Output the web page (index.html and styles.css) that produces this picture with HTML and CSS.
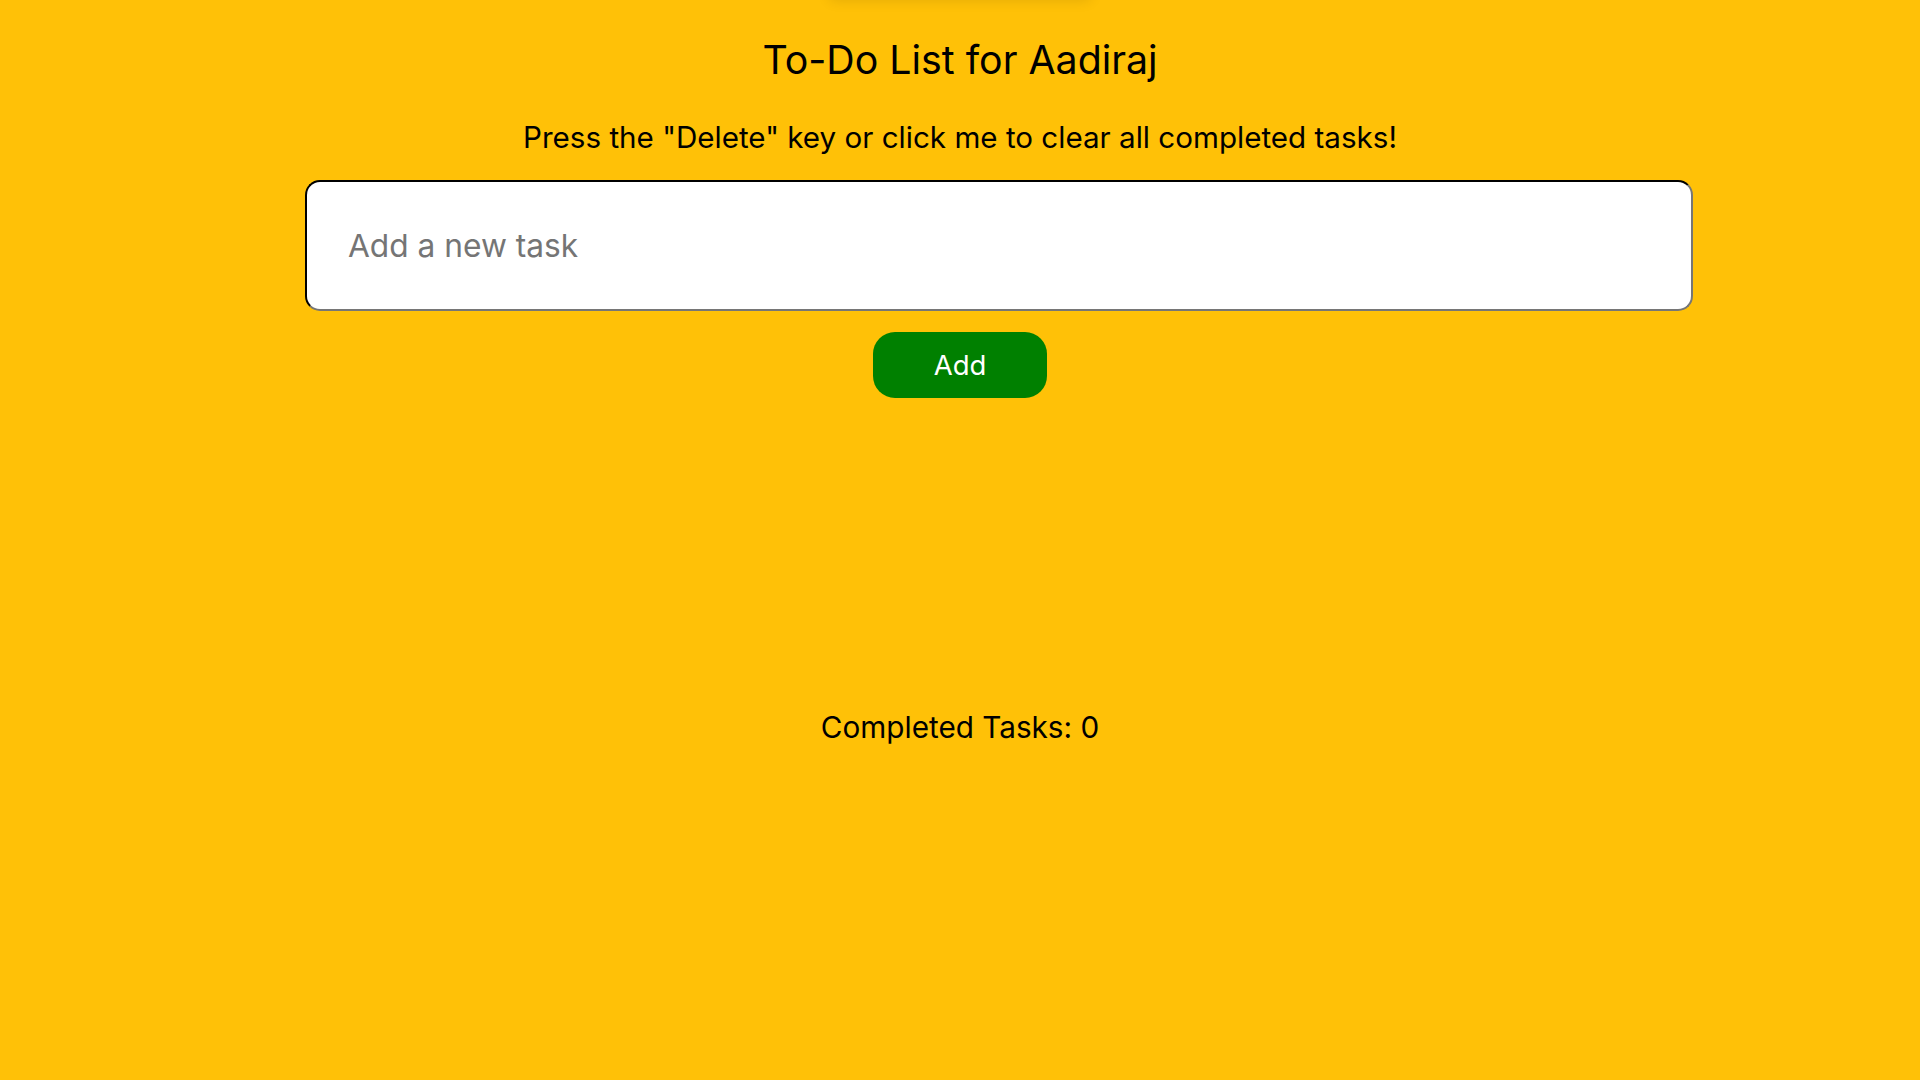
FILE: index.html
```html
<!DOCTYPE html>
<html lang="en">
<head>
<meta charset="utf-8">
<title>To-Do List</title>
<link rel="stylesheet" href="styles.css">
</head>
<body>
<div class="top-shadow"></div>
<main class="app">
  <h1 class="title">To-Do List for Aadiraj</h1>
  <p class="hint">Press the "Delete" key or click me to clear all completed tasks!</p>
  <input class="task-input" type="text" placeholder="Add a new task">
  <button class="add-btn" type="button">Add</button>
  <ul class="task-list"></ul>
  <p class="counter">Completed Tasks: 0</p>
</main>
</body>
</html>
```
FILE: styles.css
```css
html, body {
  margin: 0;
  padding: 0;
  height: 100%;
}
body {
  background: #ffc107;
  font-family: "Inter", "Noto Sans", sans-serif;
  color: #000;
  overflow: hidden;
  position: relative;
}
.top-shadow {
  position: absolute;
  left: 830px;
  top: -40px;
  width: 260px;
  height: 40px;
  box-shadow: 0 0 14px rgba(0,0,0,0.12);
}
.app {
  display: flex;
  flex-direction: column;
  align-items: center;
}
.title {
  margin: 36px 0 0;
  font-size: 39.3px;
  font-weight: 400;
  line-height: 48px;
}
.hint {
  margin: 35px 0 0;
  font-size: 29.6px;
  line-height: 36px;
}
.task-input {
  margin: 24.5px 0 0 78px;
  box-sizing: border-box;
  width: 1388px;
  height: 131px;
  border: 2px inset #767676;
  border-top-color: #1f1f1f;
  border-left-color: #1f1f1f;
  border-radius: 15px;
  padding: 0 41px;
  font-family: "Inter", sans-serif;
  font-size: 31.7px;
  background: #fff;
}
.task-input::placeholder {
  color: #757575;
}
.add-btn {
  margin-top: 21px;
  width: 174px;
  height: 66px;
  border: none;
  border-radius: 22px;
  background: #008000;
  color: #fff;
  font-family: "Inter", sans-serif;
  font-size: 27.5px;
}
.task-list {
  margin: 0;
  padding: 0;
  list-style: none;
  height: 270px;
}
.counter {
  margin: 41.5px 0 0;
  font-size: 29.7px;
  line-height: 36px;
}
```
